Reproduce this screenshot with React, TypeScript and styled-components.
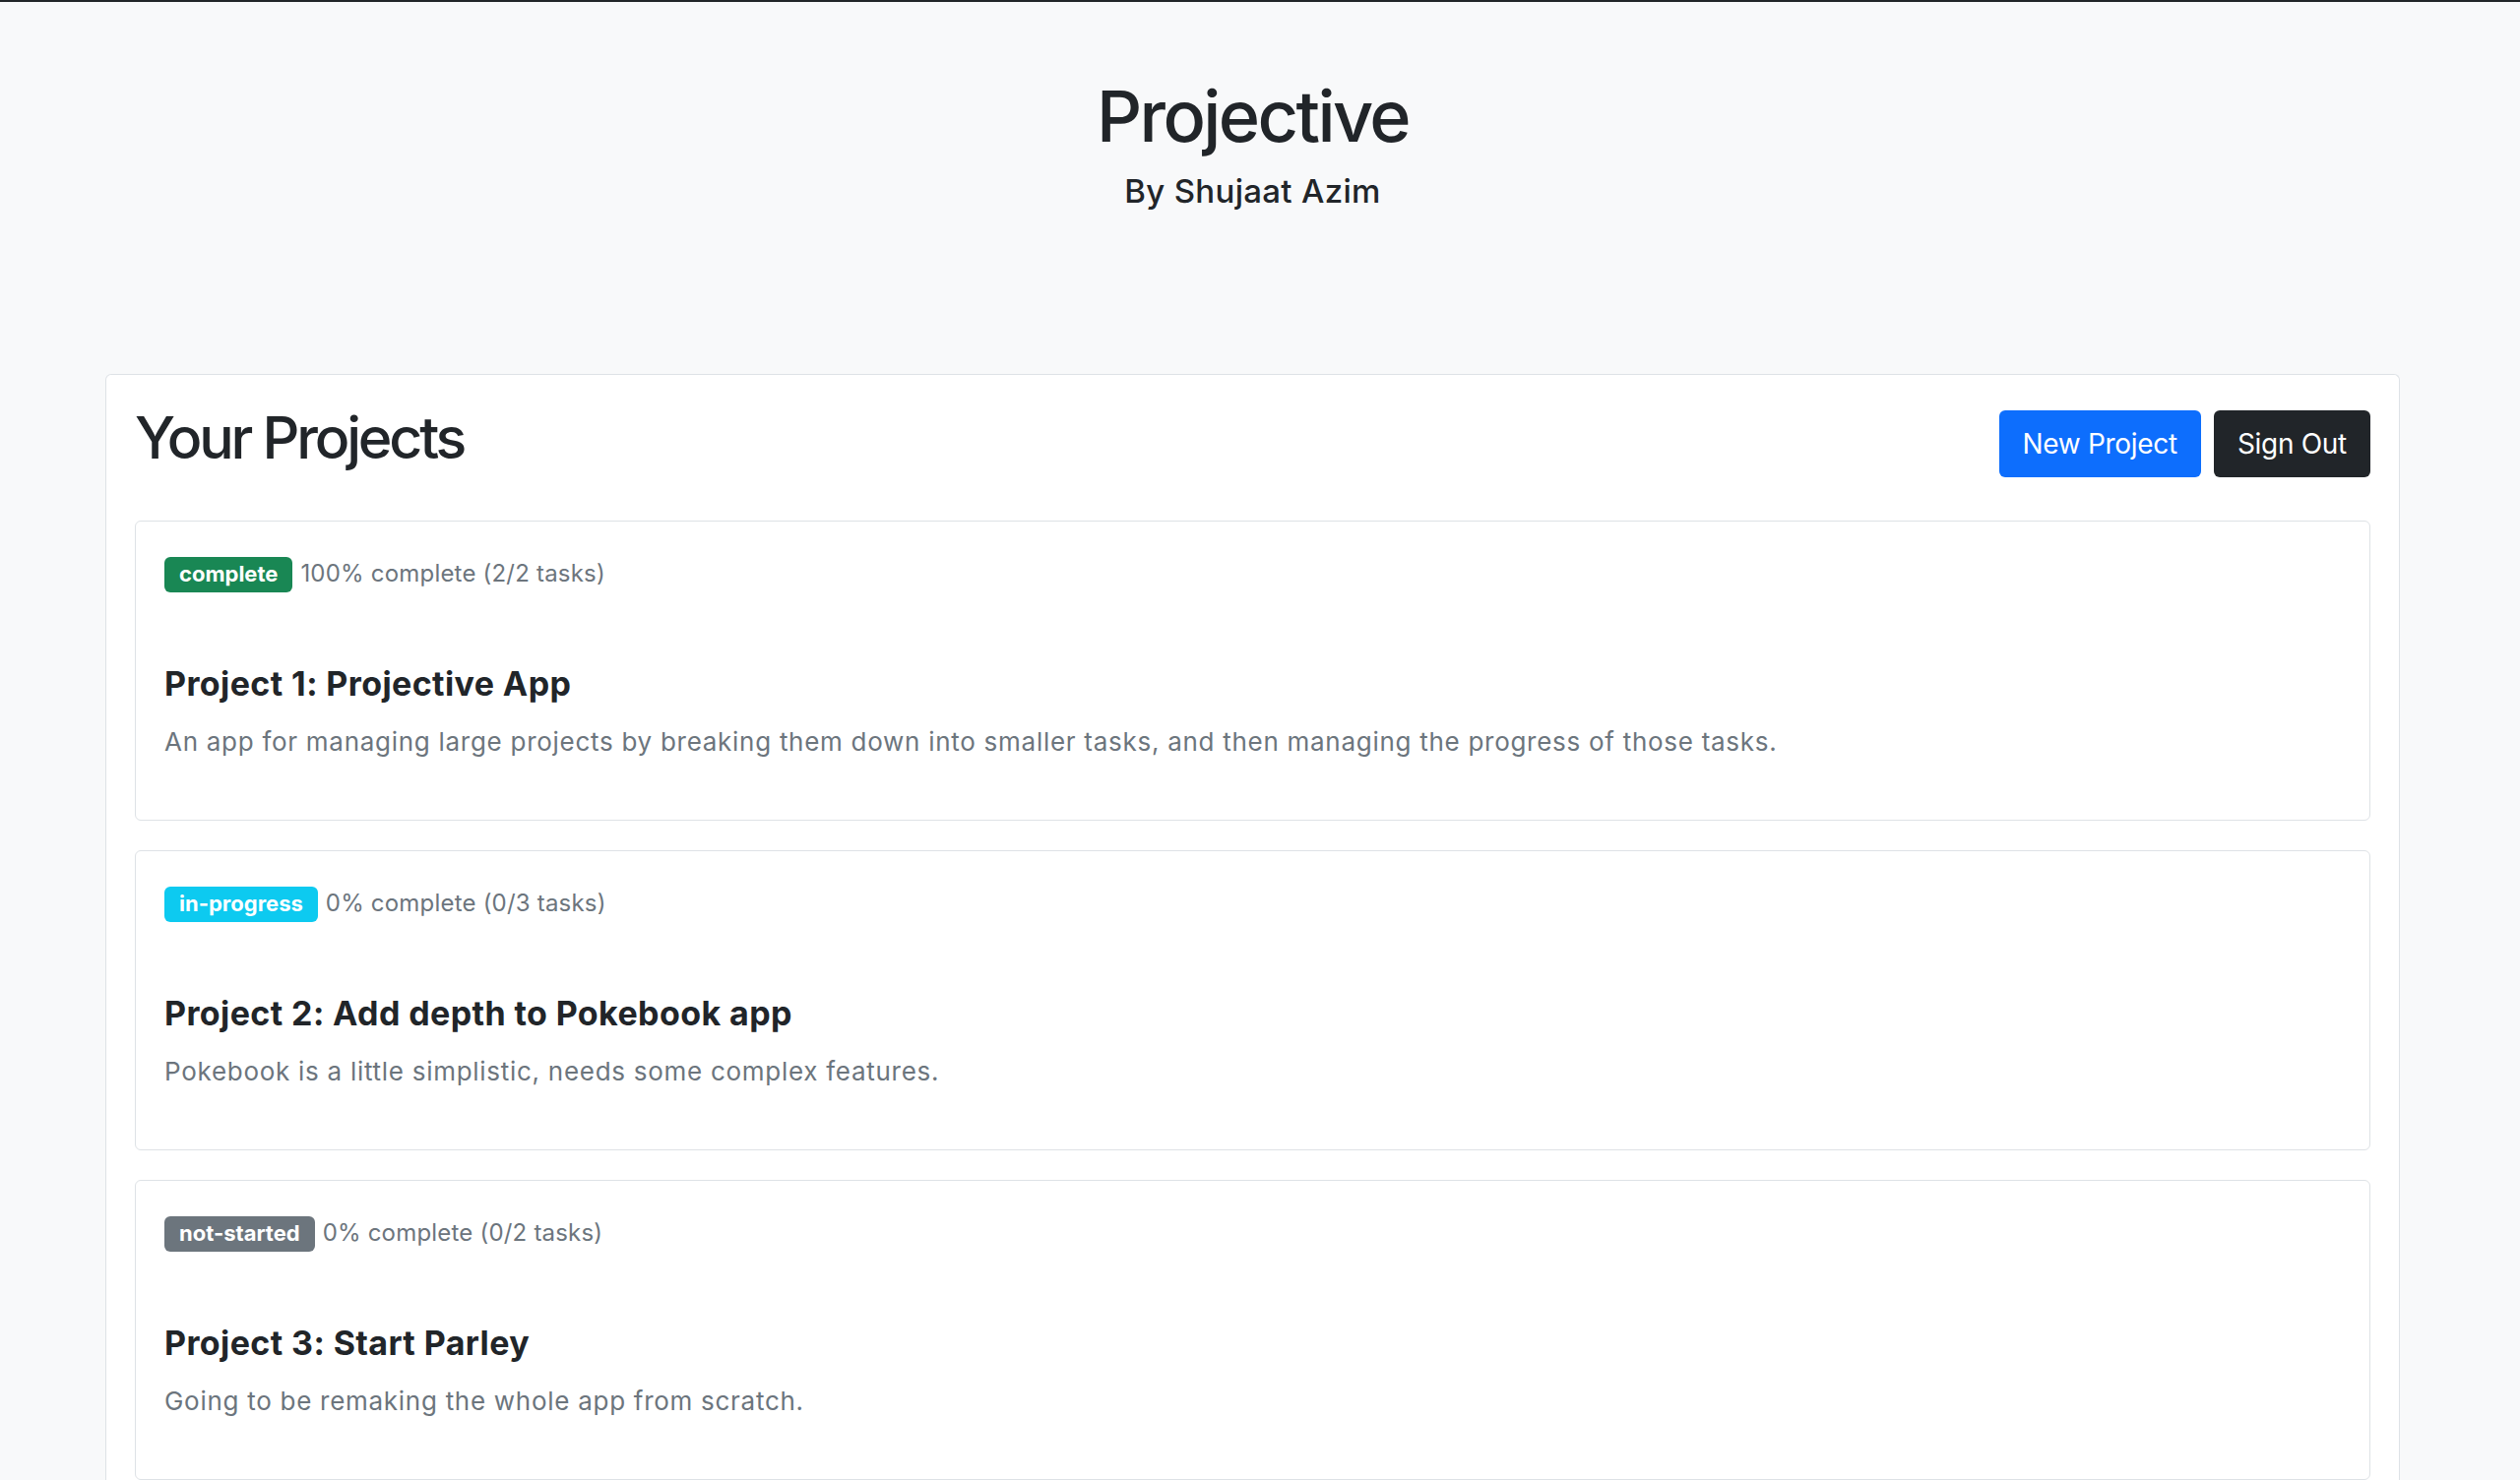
import React from "react";
import styled, { createGlobalStyle } from "styled-components";

const GlobalStyle = createGlobalStyle`
  html, body {
    margin: 0;
    padding: 0;
    background: #f8f9fa;
  }
  body {
    font-family: Inter, "Noto Sans", "Liberation Sans", sans-serif;
    color: #212529;
    border-top: 2px solid #212529;
  }
  * { box-sizing: border-box; }
`;

const Page = styled.div`
  padding: 0 122px 0 107px;
  min-height: 1502px;
`;

const Header = styled.header`
  display: flex;
  flex-direction: column;
  align-items: center;
  padding-top: 80px;
`;

const Title = styled.h1`
  margin: 0;
  font-size: 72px;
  line-height: 1;
  font-weight: 500;
  letter-spacing: -2.6px;
`;

const Subtitle = styled.h2`
  margin: 24px 0 0;
  font-size: 33px;
  line-height: 1;
  font-weight: 500;
  letter-spacing: 0.3px;
`;

const Panel = styled.section`
  margin-top: 169px;
  background: #fff;
  border: 1px solid #dee2e6;
  border-bottom: none;
  border-radius: 6px 6px 0 0;
  padding: 34px 29px 0;
`;

const PanelHead = styled.div`
  display: flex;
  justify-content: space-between;
  align-items: flex-start;
`;

const PanelTitle = styled.h2`
  margin: 0;
  font-size: 59px;
  line-height: 1;
  font-weight: 500;
  letter-spacing: -3.2px;
`;

const Actions = styled.div`
  display: flex;
  gap: 13px;
  margin-top: 2px;
`;

const Button = styled.button<{ $variant: "primary" | "dark" }>`
  height: 68px;
  padding: 0 24px;
  border: none;
  border-radius: 6px;
  font-family: inherit;
  font-size: 28px;
  font-weight: 400;
  letter-spacing: -0.3px;
  color: #fff;
  background: ${(p) => (p.$variant === "primary" ? "#0d6efd" : "#212529")};
  cursor: pointer;
`;

const List = styled.div`
  display: flex;
  flex-direction: column;
  gap: 30px;
  margin-top: 44px;
`;

const Card = styled.article`
  height: 305px;
  border: 1px solid #dee2e6;
  border-radius: 6px;
  padding: 36px 29px 0;
  background: #fff;
`;

const Meta = styled.div`
  display: flex;
  align-items: baseline;
  gap: 8px;
`;

const badgeColors = {
  complete: "#198754",
  "in-progress": "#0dcaf0",
  "not-started": "#6c757d",
} as const;

const Badge = styled.span<{ $status: keyof typeof badgeColors }>`
  display: inline-block;
  padding: 6px 15px 8px;
  font-size: 22px;
  line-height: 1;
  font-weight: 700;
  color: #fff;
  border-radius: 6px;
  background: ${(p) => badgeColors[p.$status]};
`;

const Progress = styled.span`
  font-size: 24px;
  line-height: 1;
  letter-spacing: 0.2px;
  color: #6c757d;
`;

const CardTitle = styled.h4`
  margin: 76px 0 0;
  font-size: 34px;
  line-height: 1;
  font-weight: 700;
  letter-spacing: 0.4px;
`;

const CardText = styled.p`
  margin: 29px 0 0;
  font-size: 26px;
  line-height: 1;
  letter-spacing: 0.72px;
  color: #6c757d;
`;

type Project = {
  status: keyof typeof badgeColors;
  progress: string;
  title: string;
  text: string;
};

const projects: Project[] = [
  {
    status: "complete",
    progress: "100% complete (2/2 tasks)",
    title: "Project 1: Projective App",
    text:
      "An app for managing large projects by breaking them down into smaller tasks, and then managing the progress of those tasks.",
  },
  {
    status: "in-progress",
    progress: "0% complete (0/3 tasks)",
    title: "Project 2: Add depth to Pokebook app",
    text: "Pokebook is a little simplistic, needs some complex features.",
  },
  {
    status: "not-started",
    progress: "0% complete (0/2 tasks)",
    title: "Project 3: Start Parley",
    text: "Going to be remaking the whole app from scratch.",
  },
];

export default function App() {
  return (
    <>
      <GlobalStyle />
      <Page>
        <Header>
          <Title>Projective</Title>
          <Subtitle>By Shujaat Azim</Subtitle>
        </Header>
        <Panel>
          <PanelHead>
            <PanelTitle>Your Projects</PanelTitle>
            <Actions>
              <Button $variant="primary">New Project</Button>
              <Button $variant="dark">Sign Out</Button>
            </Actions>
          </PanelHead>
          <List>
            {projects.map((p) => (
              <Card key={p.title}>
                <Meta>
                  <Badge $status={p.status}>{p.status}</Badge>
                  <Progress>{p.progress}</Progress>
                </Meta>
                <CardTitle>{p.title}</CardTitle>
                <CardText>{p.text}</CardText>
              </Card>
            ))}
          </List>
        </Panel>
      </Page>
    </>
  );
}
